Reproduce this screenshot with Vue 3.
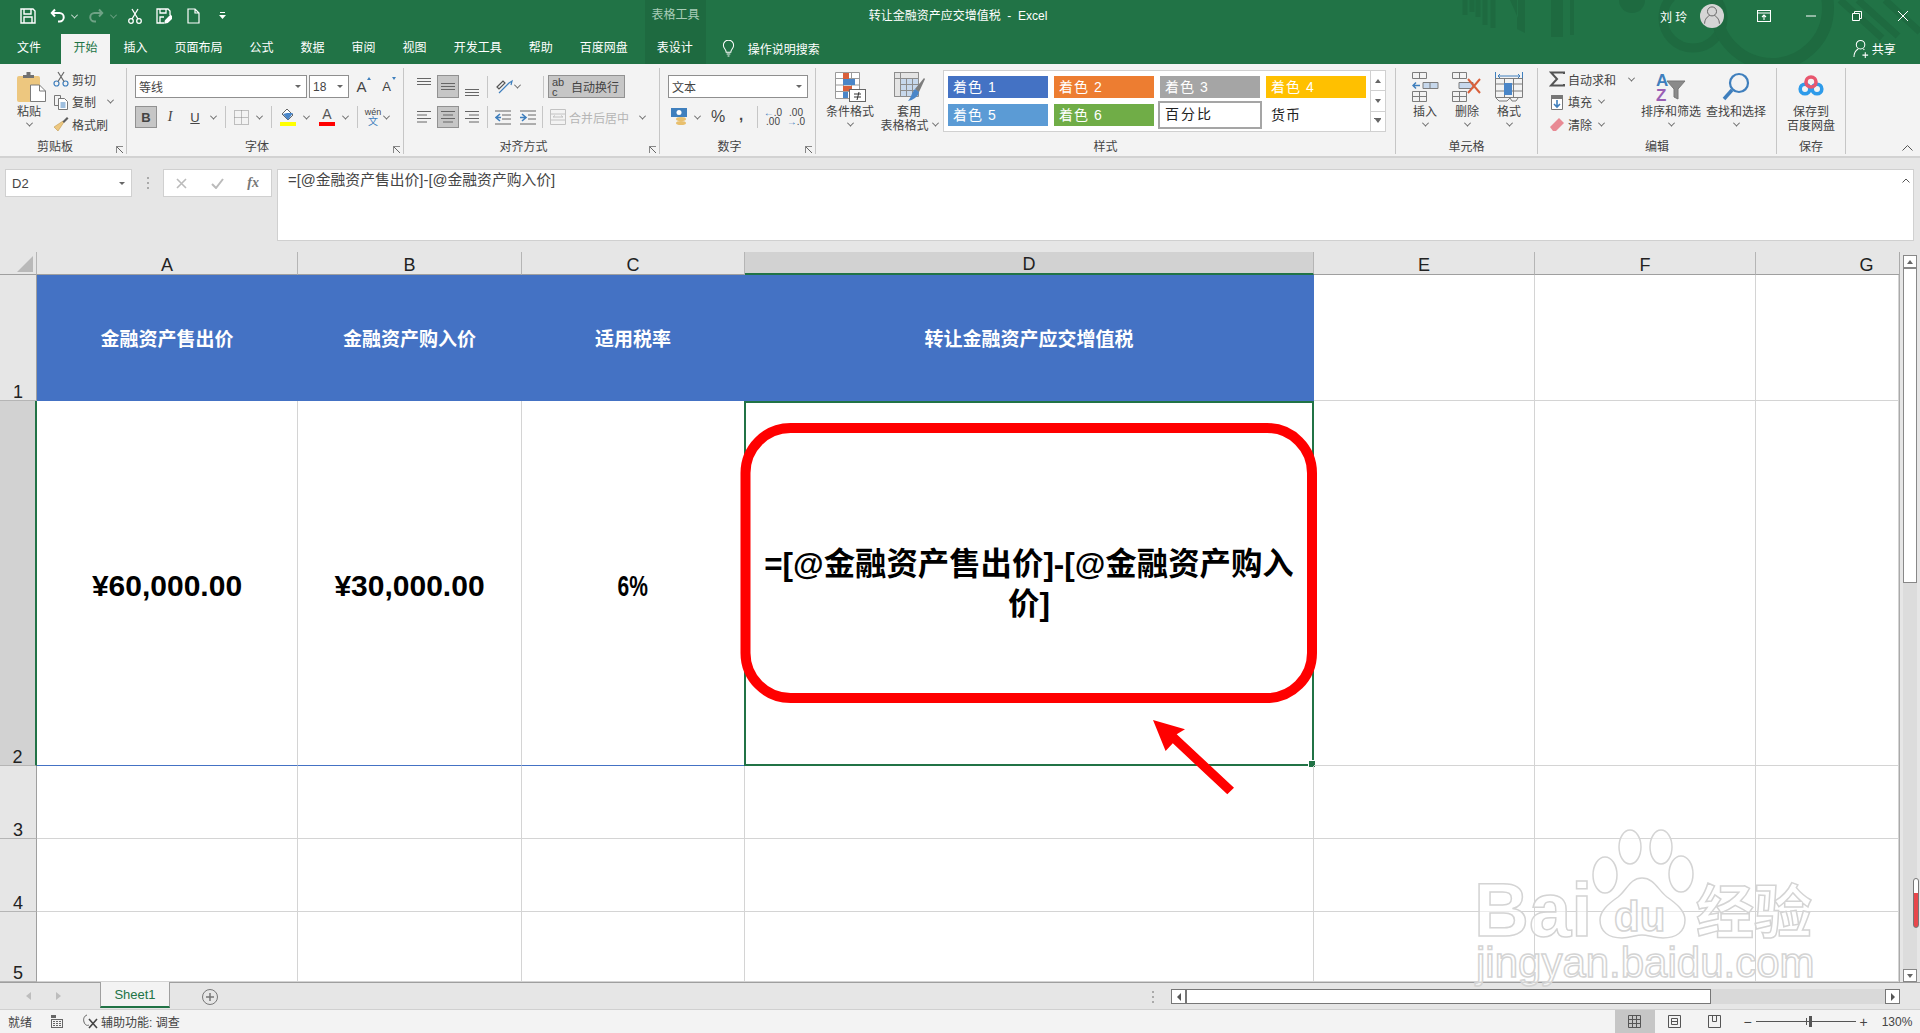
<script setup>
const tabs = ['插入', '页面布局', '公式', '数据', '审阅', '视图', '开发工具', '帮助', '百度网盘']

const styleCells = [
  { label: '着色 1', color: '#4472c4' },
  { label: '着色 2', color: '#ed7d31' },
  { label: '着色 3', color: '#a5a5a5' },
  { label: '着色 4', color: '#ffc000' },
  { label: '着色 5', color: '#5b9bd5' },
  { label: '着色 6', color: '#70ad47' },
  { label: '百分比', plain: true, picked: true },
  { label: '货币', plain: true },
]

const columns = ['A', 'B', 'C', 'D', 'E', 'F', 'G']

const formula = '=[@金融资产售出价]-[@金融资产购入价]'

// 表格内容，空串表示空单元格
const rows = [
  { n: 1, kind: 'head', cells: ['金融资产售出价', '金融资产购入价', '适用税率', '转让金融资产应交增值税', '', '', ''] },
  { n: 2, kind: 'body', cells: ['¥60,000.00', '¥30,000.00', '6%', formula, '', '', ''] },
  { n: 3, kind: 'plain', cells: ['', '', '', '', '', '', ''] },
  { n: 4, kind: 'plain', cells: ['', '', '', '', '', '', ''] },
  { n: 5, kind: 'plain', cells: ['', '', '', '', '', '', ''] },
]

const cellClass = (row, i) => ({
  'cell-head': row.kind === 'head' && i < 4,
  'cell-body': row.kind === 'body' && i < 4,
  'cell-table-end': row.kind === 'body' && i < 3,
  'cell-active': row.kind === 'body' && i === 3,
})
</script>

<template>
  <div class="excel">
    <header class="top">
      <svg class="top-pattern" viewBox="0 0 1920 64" fill="none" stroke="#1e6a40">
        <g stroke-width="5">
          <path d="M1465 0v15M1472 0v12M1478 0v17M1485 0v25M1493 0v28" />
        </g>
        <path d="M1510 0l8 18V0zM1517 0h8v33l-8-4z" fill="#1e6a40" stroke="none" />
        <path d="M1551 0h12v37h-12z" fill="#1e6a40" stroke="none" />
        <path d="M1572 0v35" stroke-width="4" />
        <circle cx="1632" cy="0" r="13" fill="#1e6a40" stroke="none" />
        <circle cx="1693" cy="18" r="30" stroke-width="9" />
        <circle cx="1772" cy="8" r="56" stroke-width="12" />
        <path d="M1840 0l42 38M1858 0l40 36M1885 0l35 32" stroke-width="7" />
      </svg>

      <div class="title-row">
        <div class="qat">
          <svg class="qat-icon" viewBox="0 0 16 16" fill="none" stroke="#fff" stroke-width="1.4">
            <path d="M1 1h12l2 2v12H1z" /><path d="M4 1v5h7V1M4 15V9h8v6" />
          </svg>
          <svg class="qat-icon undo" viewBox="0 0 16 16" fill="none" stroke="#fff" stroke-width="2">
            <path d="M5 1.500 1.800 5 5 8.500M2 5h7.500a4 4 0 0 1 0 8.500H8" />
          </svg>
          <i class="chev chev-white chev-undo"></i>
          <svg class="qat-icon redo" viewBox="0 0 16 16" fill="none" stroke="#6ea285" stroke-width="2">
            <path d="M11 1.500 14.200 5 11 8.500M14 5H6.500a4 4 0 0 0 0 8.500H8" />
          </svg>
          <i class="chev chev-dim chev-redo"></i>
          <svg class="qat-icon cut" viewBox="0 0 16 16" fill="none" stroke="#fff" stroke-width="1.300">
            <circle cx="4" cy="13" r="2.300" /><circle cx="12" cy="13" r="2.300" />
            <path d="M5 11 11 1M11 11 5 1" />
          </svg>
          <svg class="qat-icon saveas" viewBox="0 0 16 16" fill="none" stroke="#fff" stroke-width="1.300">
            <path d="M8 15H1V1h11l2 2v4" /><path d="M4 1v4h6V1M4 15V9h4" />
            <path d="M9 15l.5-2.500 5-5 2 2-5 5z" fill="#fff" />
          </svg>
          <svg class="qat-icon new" viewBox="0 0 13 16" fill="none" stroke="#fff" stroke-width="1.200">
            <path d="M1 1h7l4 4v10H1zM8 1v4h4" />
          </svg>
          <svg class="qat-more" viewBox="0 0 7 8" fill="#fff"><path d="M1 0h5v1H1zM0 3h7L3.500 7z" /></svg>
        </div>
        <div class="context-title">表格工具</div>
        <div class="doc-title">转让金融资产应交增值税&nbsp; - &nbsp;Excel</div>
        <div class="win-area">
          <span class="user-name">刘 玲</span>
          <span class="avatar">
            <svg viewBox="0 0 24 28" fill="none" stroke="#666" stroke-width="1.200">
              <circle cx="12" cy="9" r="5.500" /><path d="M3 24c0-6 4-9 6-10M21 24c0-6-4-9-6-10" />
            </svg>
          </span>
          <svg class="win-btn win-display" viewBox="0 0 14 12" fill="none" stroke="#fff" stroke-width="1.100">
            <path d="M.5.500h13v11H.5zM.5 3h13M7 10V5M5 7l2-2 2 2" />
          </svg>
          <svg class="win-btn win-min" viewBox="0 0 12 12" stroke="#fff"><path d="M1 6h10" /></svg>
          <svg class="win-btn win-max" viewBox="0 0 12 12" fill="none" stroke="#fff">
            <path d="M1.500 3.500h7v7h-7zM3.500 3.500v-2h7v7h-2" />
          </svg>
          <svg class="win-btn win-close" viewBox="0 0 12 12" stroke="#fff"><path d="M1 1l10 10M11 1 1 11" /></svg>
        </div>
      </div>

      <nav class="tab-row">
        <span class="tab tab-file">文件</span>
        <span class="tab tab-active">开始</span>
        <span v-for="t in tabs" :key="t" class="tab">{{ t }}</span>
        <span class="tab tab-context">表设计</span>
        <svg class="bulb" viewBox="0 0 14 18" fill="none" stroke="#fff" stroke-width="1.100">
          <path d="M4.500 13c0-3-3-4-3-7.500a5.500 5.500 0 0 1 11 0C12.500 9 9.500 10 9.500 13zM5 15h4M6 17h2" />
        </svg>
        <span class="search-hint">操作说明搜索</span>
        <span class="share">
          <svg viewBox="0 0 18 20" fill="none" stroke="#fff" stroke-width="1.100">
            <circle cx="8" cy="6" r="4.500" /><path d="M1 19c0-5 2-7 4.500-8.500M13 14v6M10 17h6M11 10.500l1 1" />
          </svg>
          共享
        </span>
      </nav>
    </header>

    <section class="ribbon">
      <!-- 剪贴板 -->
      <div class="group group-clip">
        <div class="group-body">
          <div class="big paste">
            <svg class="big-icon" width="29" height="30" viewBox="0 0 29 30">
              <rect x="0" y="4" width="23" height="26" rx="2" fill="#edc77f" />
              <path d="M6 6V3h3.500V0h4v3H17v3z" fill="#717171" />
              <path d="M13.500 13h9l6 6v10.500h-15z" fill="#fff" stroke="#7b7b7b" />
              <path d="M22.500 13v6h6" fill="none" stroke="#7b7b7b" />
            </svg>
            <span class="big-label">粘贴</span>
            <span class="big-label"><i class="chev"></i></span>
          </div>
          <div class="small-col">
            <div class="small-row">
              <svg viewBox="0 0 16 16" fill="none" stroke-width="1.200">
                <circle cx="3.500" cy="12.500" r="2.500" stroke="#3f7fbd" /><circle cx="12.500" cy="12.500" r="2.500" stroke="#3f7fbd" />
                <path d="M5 10.500 11 1M11 10.500 5 1" stroke="#666" />
              </svg>
              <span>剪切</span>
            </div>
            <div class="small-row">
              <svg viewBox="0 0 16 16" fill="none" stroke-width="1">
                <path d="M1.500 1.500h6v3M1.500 1.500v10h4" stroke="#777" />
                <path d="M5.500 4.500h6l3 3v8h-9z" fill="#fff" stroke="#777" />
                <path d="M7.500 9h5M7.500 11h5M7.500 13h5" stroke="#3f7fbd" />
              </svg>
              <span>复制</span>
              <i class="chev chev-copy"></i>
            </div>
            <div class="small-row">
              <svg viewBox="0 0 16 16">
                <path d="M10 5l-9 6 4 4 6-9z" fill="#edc77f" stroke="#c19a4f" stroke-width=".6" />
                <path d="M9.500 5.500 14 1l1.500 1.500L11 7z" fill="#5d5d5d" />
              </svg>
              <span>格式刷</span>
            </div>
          </div>
        </div>
        <div class="group-label with-launcher">剪贴板</div>
        <i class="launcher"></i>
      </div>

      <!-- 字体 -->
      <div class="group group-font">
        <div class="tool-row row-first">
          <div class="combo combo-font"><span>等线</span><i class="combo-caret"></i></div>
          <div class="combo combo-size"><span>18</span><i class="combo-caret"></i></div>
          <span class="size-btn size-up">A<i class="mini-tri up"></i></span>
          <span class="size-btn size-down">A<i class="mini-tri down"></i></span>
        </div>
        <div class="tool-row">
          <span class="tool pressed text-b">B</span>
          <span class="tool text-i ml-2">I</span>
          <span class="tool text-u ml-3">U</span>
          <i class="chev chev-tool"></i>
          <i class="sep sep-8"></i>
          <span class="tool">
            <svg width="15" height="15" viewBox="0 0 15 15" fill="none" stroke="#888" stroke-dasharray="1 1">
              <path d="M.5.500h14v14H.5zM7.500.500v14M.5 7.500h14" />
            </svg>
          </span>
          <i class="chev chev-tool"></i>
          <i class="sep sep-8"></i>
          <span class="tool ml-1 color-tool">
            <svg width="17" height="13" viewBox="0 0 17 13" fill="none">
              <path d="M7 1l6 6-5 5-6-6z" fill="#fff" stroke="#666" />
              <path d="M7 5h6l-5 7-5-6z" fill="#4a86c8" />
            </svg>
            <b class="swatch swatch-yellow"></b>
          </span>
          <i class="chev chev-tool"></i>
          <span class="tool ml-6 color-tool">
            <span class="letter-a">A</span>
            <b class="swatch swatch-red"></b>
          </span>
          <i class="chev chev-tool"></i>
          <i class="sep sep-8"></i>
          <span class="tool wen"><small>wén</small><em>文</em></span>
          <i class="chev"></i>
        </div>
        <div class="group-label with-launcher">字体</div>
        <i class="launcher"></i>
      </div>

      <!-- 对齐方式 -->
      <div class="group group-align">
        <div class="tool-row row-first">
          <span class="tool">
            <svg width="14" height="20" viewBox="0 0 14 20" stroke="#666"><path d="M0 1.500h14M0 4.500h14M0 7.500h14" /></svg>
          </span>
          <span class="tool pressed tall ml-2">
            <svg width="14" height="20" viewBox="0 0 14 20" stroke="#666"><path d="M0 6.500h14M0 9.500h14M0 12.500h14" /></svg>
          </span>
          <span class="tool ml-2">
            <svg width="14" height="20" viewBox="0 0 14 20" stroke="#666"><path d="M0 12.500h14M0 15.500h14M0 18.500h14" /></svg>
          </span>
          <i class="sep sep-4"></i>
          <span class="tool ml-1">
            <svg width="17" height="17" viewBox="0 0 17 17" fill="none" stroke="#555" stroke-width="1.200">
              <path d="M1 9l6-6 2 2-6 6z" /><path d="M3 15l10-10M13 5l3-2-1 4" stroke="#3f7fbd" />
            </svg>
          </span>
          <i class="chev"></i>
          <i class="sep sep-wrap"></i>
          <span class="wrap-btn">
            <span class="wrap-mark">ab<br />c</span>
            自动换行
          </span>
        </div>
        <div class="tool-row">
          <span class="tool">
            <svg width="14" height="14" viewBox="0 0 14 14" stroke="#666"><path d="M0 1.500h14M0 5h10M0 8.500h14M0 12h10" /></svg>
          </span>
          <span class="tool pressed ml-2">
            <svg width="14" height="14" viewBox="0 0 14 14" stroke="#666"><path d="M0 1.500h14M2 5h10M0 8.500h14M2 12h10" /></svg>
          </span>
          <span class="tool ml-2">
            <svg width="14" height="14" viewBox="0 0 14 14" stroke="#666"><path d="M0 1.500h14M4 5h10M0 8.500h14M4 12h10" /></svg>
          </span>
          <i class="sep sep-4"></i>
          <span class="tool">
            <svg width="16" height="15" viewBox="0 0 16 15" fill="none"><path d="M0 1h16M7 5h9M7 9h9M0 14h16" stroke="#666" /><path d="M5 4 1 7.500 5 11M1 7.500h5" stroke="#3f7fbd" stroke-width="1.600" /></svg>
          </span>
          <span class="tool ml-3">
            <svg width="16" height="15" viewBox="0 0 16 15" fill="none"><path d="M0 1h16M8 5h8M8 9h8M0 14h16" stroke="#666" /><path d="M2 4l4 3.500L2 11M6 7.500H0" stroke="#3f7fbd" stroke-width="1.600" /></svg>
          </span>
          <i class="sep sep-3"></i>
          <span class="tool merge-icon">
            <svg width="16" height="16" viewBox="0 0 16 16" fill="none" stroke="#c2c2c2">
              <path d="M.5.500h15v15H.5zM.5 5h15M.5 11h15M3 8h10M3 8l2-1.500M13 8l-2-1.500" />
            </svg>
          </span>
          <span class="merge-text">合并后居中</span>
          <i class="chev chev-merge"></i>
        </div>
        <div class="group-label with-launcher">对齐方式</div>
        <i class="launcher"></i>
      </div>

      <!-- 数字 -->
      <div class="group group-num">
        <div class="tool-row row-first">
          <div class="combo combo-num"><span>文本</span><i class="combo-caret"></i></div>
        </div>
        <div class="tool-row">
          <span class="tool">
            <svg width="17" height="18" viewBox="0 0 17 18">
              <rect x="0" y="0" width="16" height="9" fill="#3f7fbd" />
              <circle cx="8" cy="4.500" r="2.500" fill="#fff" />
              <ellipse cx="10" cy="11" rx="5" ry="2" fill="#e8bf6d" />
              <ellipse cx="10" cy="15" rx="5" ry="2" fill="#e8bf6d" />
            </svg>
          </span>
          <i class="chev chev-tool"></i>
          <span class="tool ml-6 num-sign">%</span>
          <span class="tool ml-1 num-comma">,</span>
          <i class="sep sep-num"></i>
          <span class="tool dec"><small><i class="blue">←</i>.0</small><small>.00</small></span>
          <span class="tool dec ml-1"><small>.00</small><small><i class="blue">→</i>.0</small></span>
        </div>
        <div class="group-label with-launcher">数字</div>
        <i class="launcher"></i>
      </div>

      <!-- 样式 -->
      <div class="group group-styles">
        <div class="group-body">
          <div class="big btn-cond">
            <svg class="big-icon" width="31" height="30" viewBox="0 0 31 30">
              <path d="M.5.500h24v26H.5zM8.500.500v26M16.500.500v26M.5 6.500h24M.5 13h24M.5 19.500h24" fill="#fff" stroke="#9a9a9a" />
              <rect x="8" y="1" width="6" height="6" fill="#d9603b" />
              <rect x="8" y="7" width="12" height="6" fill="#4a86c8" />
              <rect x="8" y="14" width="9" height="5" fill="#d9603b" />
              <rect x="8" y="20" width="5" height="6" fill="#4a86c8" />
              <rect x="14.500" y="17.500" width="16" height="12" fill="#fff" stroke="#666" />
              <path d="M19 22h7M19 25h7M24 20l-2 8" stroke="#333" fill="none" />
            </svg>
            <span class="big-label">条件格式</span>
            <span class="big-label"><i class="chev"></i></span>
          </div>
          <div class="big btn-table">
            <svg class="big-icon" width="31" height="30" viewBox="0 0 31 30">
              <path d="M.5.500h24v24H.5z" fill="#c7d8ec" stroke="#8d8d8d" />
              <path d="M.5 6.500h24M.5 12.500h24M.5 18.500h24M6.500.500v24M12.500.500v24M18.500.500v24" stroke="#8d8d8d" fill="none" />
              <path d="M.5.500h24v6H.5zM.5.500h6v24H.5z" fill="#e4e4e4" stroke="#8d8d8d" />
              <path d="M21 17 30 6l1 1-6 13z" fill="#7d7d7d" />
              <path d="M21 17l4 3c-1 5-6 8-11 9 3-3 4-9 7-12z" fill="#4a86c8" />
            </svg>
            <span class="big-label">套用</span>
            <span class="big-label">表格格式<i class="chev chev-inline"></i></span>
          </div>
          <div class="gallery">
            <div class="gallery-cells">
              <span
                v-for="s in styleCells"
                :key="s.label"
                class="style-cell"
                :class="{ plain: s.plain, picked: s.picked }"
                :style="s.color ? { background: s.color } : null"
              >{{ s.label }}</span>
            </div>
            <div class="gallery-scroll">
              <span><i class="tri-up"></i></span>
              <span><i class="tri-down"></i></span>
              <span class="more"><i class="tri-down"></i></span>
            </div>
          </div>
        </div>
        <div class="group-label">样式</div>
      </div>

      <!-- 单元格 -->
      <div class="group group-cells">
        <div class="group-body">
          <div class="big cell-btn">
            <svg class="big-icon" width="27" height="30" viewBox="0 0 27 30" fill="none" stroke="#7d7d7d">
              <path d="M.5.500h14v6H.5zM7.500.500v6M.5 19.500h14v10H.5zM.5 24.500h14M7.500 19.500v10" />
              <path d="M11 10.500h15v6H11zM18 10.500v6" fill="#c7d8ec" />
              <path d="M8 13.500H1M4 10.500l-3 3 3 3" stroke="#3f7fbd" stroke-width="1.500" />
            </svg>
            <span class="big-label">插入</span>
            <span class="big-label"><i class="chev"></i></span>
          </div>
          <div class="big cell-btn">
            <svg class="big-icon" width="30" height="30" viewBox="0 0 30 30" fill="none" stroke="#7d7d7d">
              <path d="M.5.500h14v6H.5zM7.500.500v6M.5 19.500h14v10H.5zM.5 24.500h14M7.500 19.500v10" />
              <path d="M7 10.500h14v6H7z" fill="#c7d8ec" />
              <path d="M16 7l12 14M28 7 16 21" stroke="#d9603b" stroke-width="2" />
            </svg>
            <span class="big-label">删除</span>
            <span class="big-label"><i class="chev"></i></span>
          </div>
          <div class="big cell-btn">
            <svg class="big-icon" width="28" height="30" viewBox="0 0 28 30" fill="none" stroke="#7d7d7d">
              <path d="M3 4h22M3 4l2-2M3 4l2 2M25 4l-2-2M25 4l-2 2M.5 0v7M27.500 0v7" stroke="#3f7fbd" />
              <path d="M.5 6.500h27v19H.5zM9.500 6.500v19M18.500 6.500v19M.5 12h27M.5 19h27" />
              <rect x="9" y="11" width="8" height="12" fill="#4a86c8" stroke="none" />
              <path d="M1 26l3 3h8l3-3 2 3h4l2-3" />
            </svg>
            <span class="big-label">格式</span>
            <span class="big-label"><i class="chev"></i></span>
          </div>
        </div>
        <div class="group-label">单元格</div>
      </div>

      <!-- 编辑 -->
      <div class="group group-edit">
        <div class="group-body">
          <div class="small-col edit-col">
            <div class="small-row">
              <svg viewBox="0 0 16 16" fill="none" stroke="#555" stroke-width="2"><path d="M15 3V1.500H2L8 8l-6 6.500h13V13" /></svg>
              <span>自动求和</span>
              <i class="chev chev-sum"></i>
            </div>
            <div class="small-row">
              <svg viewBox="0 0 16 16" fill="none">
                <path d="M2.500 1.500h11v14h-11z" fill="#fff" stroke="#777" />
                <path d="M2.500 1.500h11v3h-11z" fill="#777" stroke="#777" />
                <path d="M8 6v7M5 10l3 3 3-3" stroke="#3f7fbd" stroke-width="1.600" />
              </svg>
              <span>填充</span>
              <i class="chev chev-fill"></i>
            </div>
            <div class="small-row">
              <svg viewBox="0 0 16 16"><path d="M1 11 10 2l5 5-8 8H4z" fill="#e88a94" /></svg>
              <span>清除</span>
              <i class="chev chev-fill"></i>
            </div>
          </div>
          <div class="big edit-btn">
            <svg class="big-icon" width="31" height="30" viewBox="0 0 31 30" fill="none">
              <text x="0" y="14" class="sort-a">A</text>
              <text x="0" y="29" class="sort-z">Z</text>
              <path d="M11 9h18l-7 8v10l-4-2v-8z" fill="#8a8a8a" stroke="#777" />
            </svg>
            <span class="big-label">排序和筛选</span>
            <span class="big-label"><i class="chev"></i></span>
          </div>
          <div class="big edit-btn btn-find">
            <svg class="big-icon" width="28" height="30" viewBox="0 0 28 30" fill="none" stroke="#3f7fbd">
              <circle cx="17" cy="11" r="9" stroke-width="2.200" />
              <path d="M10 18 2 27" stroke-width="3.500" />
            </svg>
            <span class="big-label">查找和选择</span>
            <span class="big-label"><i class="chev"></i></span>
          </div>
        </div>
        <div class="group-label">编辑</div>
      </div>

      <!-- 保存 -->
      <div class="group group-save">
        <div class="big save-btn">
          <svg class="big-icon" width="28" height="30" viewBox="0 0 28 30" fill="none" stroke-width="3.600">
            <circle cx="8" cy="17" r="4.800" stroke="#2e9bea" />
            <circle cx="20" cy="17" r="4.800" stroke="#2e9bea" />
            <circle cx="14" cy="10" r="5" stroke="#e8566e" />
          </svg>
          <span class="big-label">保存到</span>
          <span class="big-label">百度网盘</span>
        </div>
        <div class="group-label">保存</div>
      </div>

      <svg class="collapse" width="11" height="6" viewBox="0 0 11 6" fill="none" stroke="#555"><path d="M.5 5.500l5-5 5 5" /></svg>
    </section>

    <section class="formula-bar">
      <div class="name-box">D2<i class="combo-caret"></i></div>
      <span class="fb-dots"></span>
      <div class="fn-box">
        <svg width="11" height="11" viewBox="0 0 11 11" stroke="#bbb" stroke-width="1.600"><path d="M1 1l9 9M10 1 1 10" /></svg>
        <svg width="13" height="11" viewBox="0 0 13 11" fill="none" stroke="#bbb" stroke-width="2"><path d="M1 6l4 4 7-9" /></svg>
        <span class="fx">fx</span>
      </div>
      <div class="formula-input">
        {{ formula }}
        <svg class="formula-up" width="8" height="5" viewBox="0 0 8 5" fill="none" stroke="#555"><path d="M.5 4.500 4 1l3.500 3.500" /></svg>
      </div>
    </section>

    <section class="sheet">
      <div class="grid">
        <div class="corner"><i></i></div>
        <div
          v-for="c in columns"
          :key="c"
          class="col-head"
          :class="{ selected: c === 'D', clipped: c === 'G' }"
        >{{ c }}</div>
        <template v-for="row in rows" :key="row.n">
          <div class="row-head" :class="{ selected: row.n === 2 }">{{ row.n }}</div>
          <div
            v-for="(text, i) in row.cells"
            :key="i"
            class="cell"
            :class="cellClass(row, i)"
          >
            <span :class="{ 'text-narrow': text === '6%' }">{{ text }}</span>
            <i v-if="row.kind === 'body' && i === 3" class="fill-handle"></i>
          </div>
        </template>
      </div>

      <div class="vscroll">
        <span class="vs-btn"><i class="tri-up"></i></span>
        <span class="vs-thumb"></span>
        <span class="vs-track"></span>
        <span class="vs-btn"><i class="tri-down"></i></span>
        <span class="vs-mark"></span>
      </div>

      <!-- 标注和水印，盖在表格上面 -->
      <svg class="overlay" viewBox="0 252 1920 730">
        <g class="watermark">
          <text x="1474" y="936" class="wm-bai">Bai</text>
          <ellipse cx="1630" cy="847" rx="11" ry="17" />
          <ellipse cx="1661" cy="847" rx="11" ry="17" />
          <ellipse cx="1605" cy="875" rx="12" ry="18" />
          <ellipse cx="1681" cy="874" rx="12" ry="18" />
          <path d="M1642 878c-12 0-15 12-24 19-10 7-18 14-18 23 0 12 9 18 22 18 8 0 14-3 20-3s13 3 21 3c13 0 22-6 22-18 0-9-8-16-18-23-9-7-13-19-25-19z" />
          <text x="1614" y="931" class="wm-du">du</text>
          <text x="1696" y="933" class="wm-cn">经验</text>
          <text x="1476" y="977" class="wm-site">jingyan.baidu.com</text>
        </g>
        <rect x="745.500" y="428" width="566.500" height="270" rx="45" fill="none" stroke="#f00" stroke-width="10" />
        <path d="M1153 720l32 9.300-8.300 5 57.300 53.400-6.700 6.600-54.500-51-7.200 7.700z" fill="#f00" />
      </svg>
    </section>

    <section class="sheet-tabs">
      <span class="nav-arrow">
        <svg width="6" height="8" viewBox="0 0 6 8" fill="#bdbdbd"><path d="M5 0v8L0 4z" /></svg>
      </span>
      <span class="nav-arrow">
        <svg width="6" height="8" viewBox="0 0 6 8" fill="#bdbdbd"><path d="M1 0v8l5-4z" /></svg>
      </span>
      <span class="sheet-tab">Sheet1</span>
      <svg class="add-sheet" width="16" height="16" viewBox="0 0 16 16" fill="none" stroke="#777">
        <circle cx="8" cy="8" r="7.500" /><path d="M8 4v8M4 8h8" stroke-width="1.500" />
      </svg>
      <span class="hs-dots"></span>
      <div class="hscroll">
        <span class="hs-btn"><svg width="4" height="8" viewBox="0 0 4 8" fill="#555"><path d="M4 0v8L0 4z" /></svg></span>
        <span class="hs-thumb"></span>
        <span class="hs-track"></span>
        <span class="hs-btn"><svg width="4" height="8" viewBox="0 0 4 8" fill="#555"><path d="M0 0v8l4-4z" /></svg></span>
      </div>
    </section>

    <footer class="status">
      <span class="st-ready">就绪</span>
      <svg class="st-macro" width="12" height="13" viewBox="0 0 12 13" fill="#666">
        <path d="M0 4h12v9H0zM1 5v7h10V5z" /><path d="M2 6h2v1H2zM5 6h2v1H5zM8 6h2v1H8zM2 8h2v1H2zM5 8h2v1H5zM8 8h2v1H8zM2 10h2v1H2zM5 10h2v1H5zM8 10h2v1H8z" /><rect x="0" y="0" width="5" height="3" />
      </svg>
      <svg class="st-access" width="16" height="15" viewBox="0 0 16 15" fill="none" stroke="#666">
        <path d="M5 1C2 2 1 5 2 8s3 4 5 3" /><path d="M7 5l8 9M15 5l-8 9" stroke="#444" stroke-width="1.600" />
      </svg>
      <span class="st-text">辅助功能: 调查</span>
      <div class="view-btns">
        <span class="view-btn on">
          <svg width="13" height="13" viewBox="0 0 13 13" fill="none" stroke="#555"><path d="M.5.500h12v12H.5zM4.500.500v12M8.500.500v12M.5 4.500h12M.5 8.500h12" /></svg>
        </span>
        <span class="view-btn">
          <svg width="13" height="13" viewBox="0 0 13 13" fill="none" stroke="#555"><path d="M.5.500h12v12H.5zM3.500 3.500h6v6h-6zM3.500 6.500h6" /></svg>
        </span>
        <span class="view-btn">
          <svg width="13" height="13" viewBox="0 0 13 13" fill="none" stroke="#555"><path d="M.5.500h12v12H.5zM4.500.500v6h4v-6" /></svg>
        </span>
      </div>
      <div class="zoom-bar">
        <span class="zoom-sign">−</span>
        <span class="zoom-track"><i class="zoom-mid"></i><i class="zoom-thumb"></i></span>
        <span class="zoom-sign">+</span>
        <span class="zoom-pct">130%</span>
      </div>
    </footer>
  </div>
</template>

<style scoped>
.excel {
  width: 1920px;
  height: 1033px;
  display: flex;
  flex-direction: column;
  overflow: hidden;
  background: #e6e6e6;
  font-family: "Liberation Sans", "Noto Sans CJK SC", sans-serif;
  font-size: 12px;
  color: #444;
}

.excel svg {
  display: block;
  flex-shrink: 0;
}

/* 顶部绿色区域 */
.top {
  position: relative;
  height: 64px;
  flex-shrink: 0;
  background: #217346;
  color: #fff;
}

.top-pattern {
  position: absolute;
  top: 0;
  left: 0;
  width: 1920px;
  height: 64px;
}

.title-row,
.tab-row {
  position: relative;
  display: flex;
  align-items: center;
  height: 32px;
}

.qat {
  position: relative;
  display: flex;
  align-items: center;
  width: 645px;
  height: 32px;
  padding-left: 20px;
  box-sizing: border-box;
}

.qat-icon {
  width: 16px;
  height: 16px;
}

.undo {
  margin-left: 14px;
}

.redo {
  margin-left: 11px;
}

.cut {
  margin-left: 11px;
}

.saveas {
  margin-left: 13px;
}

.new {
  width: 13px;
  margin-left: 15px;
}

.qat-more {
  width: 7px;
  height: 8px;
  margin-left: 19px;
}

.chev {
  display: inline-block;
  width: 4px;
  height: 4px;
  flex-shrink: 0;
  border-right: 1px solid #666;
  border-bottom: 1px solid #666;
  transform: rotate(45deg) translate(-1px, -1px);
}

.chev-white {
  border-color: #d5e5dc;
}

.chev-dim {
  border-color: #6ea285;
}

.chev-undo {
  margin-left: 6px;
}

.chev-redo {
  margin-left: 7px;
}

.context-title {
  width: 61px;
  height: 32px;
  line-height: 30px;
  text-align: center;
  background: #1e6a40;
  color: #a9cdb8;
}

.doc-title {
  flex: 1;
  padding-bottom: 3px;
  text-align: center;
  white-space: nowrap;
}

.win-area {
  display: flex;
  align-items: center;
  width: 710px;
  height: 32px;
}

.user-name {
  margin-left: 450px;
  width: 30px;
  white-space: nowrap;
}

.avatar {
  display: flex;
  justify-content: center;
  width: 24px;
  height: 24px;
  margin-left: 10px;
  border-radius: 50%;
  overflow: hidden;
  background: #d5d5d5;
}

.avatar svg {
  width: 20px;
  height: 23px;
}

.win-btn {
  width: 12px;
  height: 12px;
}

.win-display {
  width: 14px;
  margin-left: 33px;
}

.win-min {
  margin-left: 34px;
}

.win-max {
  margin-left: 34px;
}

.win-close {
  margin-left: 34px;
}

.tab-row {
  white-space: nowrap;
}

.tab {
  height: 32px;
  line-height: 33px;
  padding: 0 13.5px;
}

.tab-file {
  margin-left: 3.5px;
}

.tab-active {
  height: 30px;
  margin: 2px 0 0 6.5px;
  padding: 0 12.5px;
  line-height: 29px;
  background: #f3f3f3;
  color: #217346;
}

.tab-context {
  margin-left: 3.5px;
  padding: 0 13px 0 12px;
  background: #1e6a40;
}

.bulb {
  width: 13px;
  height: 17px;
  margin-left: 16px;
}

.search-hint {
  margin-left: 13px;
}

.share {
  display: flex;
  align-items: center;
  gap: 2px;
  margin-left: 1033px;
}

.share svg {
  width: 17px;
  height: 19px;
}

/* 功能区 */
.ribbon {
  display: flex;
  height: 94px;
  flex-shrink: 0;
  box-sizing: border-box;
  background: #f3f3f3;
  border-bottom: 2px solid #d2d2d2;
  white-space: nowrap;
}

.group {
  position: relative;
  display: flex;
  flex-direction: column;
  height: 86px;
  margin-top: 4px;
  box-sizing: border-box;
  border-right: 1px solid #c6c6c6;
}

.group-body {
  display: flex;
  height: 72px;
}

.group-label {
  margin-top: auto;
  height: 15px;
  line-height: 16px;
  text-align: center;
  color: #444;
}

.with-launcher {
  padding-right: 16px;
}

.launcher {
  position: absolute;
  right: 3px;
  bottom: 1px;
  width: 6px;
  height: 6px;
  border-left: 1px solid #888;
  border-top: 1px solid #888;
  background: linear-gradient(45deg, transparent 45%, #666 45%, #666 55%, transparent 55%);
}

.group-clip {
  width: 127px;
}

.group-font {
  width: 277px;
  padding-left: 8px;
}

.group-align {
  width: 256px;
  padding-left: 9px;
}

.group-num {
  width: 156px;
  padding-left: 8px;
}

.group-font .group-label,
.group-num .group-label {
  margin-left: -8px;
}

.group-align .group-label {
  margin-left: -9px;
}

.group-styles {
  width: 580px;
}

.group-cells {
  width: 142px;
}

.group-edit {
  width: 239px;
}

.group-save {
  width: 69px;
}

.big {
  display: flex;
  flex-direction: column;
  align-items: center;
  flex-shrink: 0;
  padding-top: 4px;
  line-height: 14px;
}

.big-icon {
  height: 30px;
  margin-bottom: 3px;
}

.big-label {
  height: 14px;
  line-height: 14px;
}

.big-label .chev {
  vertical-align: 3px;
}

.paste {
  width: 40px;
  margin-left: 9px;
}

.paste .big-icon {
  margin-left: 4px;
}

.small-col {
  display: flex;
  flex-direction: column;
  margin-left: 4px;
}

.small-row {
  display: flex;
  align-items: center;
  height: 22.5px;
  gap: 3px;
}

.small-row svg {
  width: 16px;
  height: 16px;
}

.chev-copy {
  margin-left: 9px;
}

.tool-row {
  display: flex;
  align-items: center;
  height: 22px;
  margin-top: 9px;
}

.row-first {
  height: 23px;
  margin-top: 7px;
}

.tool-row + .tool-row {
  margin-top: 8px;
}

.tool {
  display: flex;
  flex-direction: column;
  align-items: center;
  justify-content: center;
  width: 22px;
  height: 22px;
  box-sizing: border-box;
  flex-shrink: 0;
}

.tall {
  height: 23px;
}

.pressed {
  background: #c6c6c6;
  border: 1px solid #919191;
}

.ml-1 {
  margin-left: 1px;
}

.ml-2 {
  margin-left: 2px;
}

.ml-3 {
  margin-left: 3px;
}

.ml-6 {
  margin-left: 6px;
}

.text-b {
  font: bold 13px "Liberation Sans", sans-serif;
}

.text-i {
  font: italic 14px "Liberation Serif", serif;
}

.text-u {
  font: 13px "Liberation Sans", sans-serif;
  text-decoration: underline;
}

.chev-tool {
  margin: 0 1px 0 5px;
}

.sep {
  display: block;
  width: 1px;
  height: 22px;
  flex-shrink: 0;
  background: #c6c6c6;
}

.sep-8 {
  margin: 0 4px 0 8px;
}

.sep-4 {
  margin: 0 4px;
}

.sep-3 {
  margin: 0 4px 0 3px;
}

.sep-wrap {
  margin: 0 4px 0 23px;
}

.sep-num {
  margin: 0 4px 0 5px;
}

.combo {
  display: flex;
  align-items: center;
  justify-content: space-between;
  height: 23px;
  box-sizing: border-box;
  padding: 0 5px 0 3px;
  background: #fff;
  border: 1px solid #8f8f8f;
  flex-shrink: 0;
}

.combo-font {
  width: 172px;
}

.combo-size {
  width: 40px;
  margin-left: 2px;
}

.combo-num {
  width: 140px;
}

.combo-caret {
  display: block;
  width: 0;
  height: 0;
  border-left: 3px solid transparent;
  border-right: 3px solid transparent;
  border-top: 3px solid #666;
}

.size-btn {
  position: relative;
  display: block;
  width: 13px;
  font-size: 15px;
  line-height: 18px;
  text-align: center;
}

.size-up {
  margin-left: 6px;
}

.size-down {
  margin-left: 12px;
  font-size: 13px;
}

.mini-tri {
  position: absolute;
  top: -1px;
  right: -3px;
  width: 0;
  height: 0;
  border-left: 2.5px solid transparent;
  border-right: 2.5px solid transparent;
}

.mini-tri.up {
  border-bottom: 3px solid #3f7fbd;
}

.mini-tri.down {
  border-top: 3px solid #3f7fbd;
}

.color-tool {
  justify-content: flex-start;
  padding-top: 2px;
}

.swatch {
  display: block;
  width: 16px;
  height: 4px;
  margin-top: 1px;
}

.swatch-yellow {
  background: #ffff00;
}

.swatch-red {
  background: #ff0000;
}

.letter-a {
  font-size: 14px;
  line-height: 13px;
  color: #555;
}

.wen small {
  font-size: 9px;
  line-height: 10px;
}

.wen em {
  font-style: normal;
  font-size: 10px;
  line-height: 10px;
  color: #3f7fbd;
}

.wrap-btn {
  display: flex;
  align-items: center;
  width: 77px;
  height: 23px;
  box-sizing: border-box;
  padding-left: 3px;
  gap: 5px;
  background: #c6c6c6;
  border: 1px solid #919191;
}

.wrap-mark {
  width: 14px;
  font-size: 11px;
  line-height: 10px;
}

.merge-text {
  color: #b5b5b5;
}

.chev-merge {
  margin-left: 11px;
}

.num-sign {
  font-size: 16px;
}

.num-comma {
  font-size: 15px;
  font-weight: bold;
  padding-bottom: 6px;
}

.dec small {
  font-size: 10px;
  line-height: 9px;
  white-space: nowrap;
}

.blue {
  font-style: normal;
  font-weight: bold;
  color: #3f7fbd;
}

.btn-cond {
  width: 48px;
  margin-left: 10px;
}

.btn-table {
  width: 60px;
  margin-left: 5px;
}

.chev-inline {
  margin-left: 4px;
}

.gallery {
  display: flex;
  height: 62px;
  margin: 2px 0 0 4px;
  box-sizing: border-box;
  background: #fff;
  border: 1px solid #d0d0d0;
}

.gallery-cells {
  display: grid;
  grid-template-columns: repeat(4, 100px);
  grid-auto-rows: 22px;
  gap: 6px;
  padding: 5px 4px;
}

.style-cell {
  padding-left: 5px;
  font-size: 14px;
  line-height: 22px;
  letter-spacing: 1px;
  color: #fff;
}

.style-cell.plain {
  color: #222;
}

.style-cell.picked {
  margin: -3px -2px;
  padding-left: 5px;
  box-sizing: border-box;
  line-height: 22px;
  letter-spacing: 2px;
  border: 2px solid #a5a5a5;
  box-shadow: inset 0 0 0 1px #fff;
}

.gallery-scroll {
  display: flex;
  flex-direction: column;
  width: 14px;
  margin-left: auto;
  border-left: 1px solid #d0d0d0;
}

.gallery-scroll span {
  display: flex;
  flex: 1;
  align-items: center;
  justify-content: center;
  background: #fff;
  border-bottom: 1px solid #d0d0d0;
}

.gallery-scroll span:last-child {
  border-bottom: 0;
}

.more {
  position: relative;
}

.more::before {
  content: "";
  position: absolute;
  top: 6px;
  left: 3px;
  width: 7px;
  height: 1px;
  background: #666;
}

.tri-up {
  display: block;
  width: 0;
  height: 0;
  border-left: 3px solid transparent;
  border-right: 3px solid transparent;
  border-bottom: 4px solid #666;
}

.tri-down {
  display: block;
  width: 0;
  height: 0;
  border-left: 3px solid transparent;
  border-right: 3px solid transparent;
  border-top: 4px solid #666;
}

.group-cells .group-body {
  padding-left: 8px;
}

.cell-btn {
  width: 42px;
}

.edit-col {
  width: 91px;
  margin-left: 11px;
}

.chev-sum {
  margin-left: 10px;
}

.chev-fill {
  margin-left: 4px;
}

.edit-btn {
  width: 62px;
}

.btn-find {
  margin-left: 3px;
}

.sort-a {
  font: bold 17px "Liberation Sans", sans-serif;
  fill: #3f7fbd;
}

.sort-z {
  font: bold 17px "Liberation Sans", sans-serif;
  fill: #9a5fb4;
}

.collapse {
  align-self: flex-end;
  margin: 0 7px 5px auto;
}

/* 编辑栏 */
.formula-bar {
  display: flex;
  height: 94px;
  flex-shrink: 0;
  box-sizing: border-box;
  padding: 11px 6px 0 5px;
  align-items: flex-start;
}

.name-box {
  display: flex;
  align-items: center;
  justify-content: space-between;
  width: 127px;
  height: 28px;
  box-sizing: border-box;
  padding: 0 6px;
  background: #fff;
  border: 1px solid #d0d0d0;
  font-size: 13px;
}

.fb-dots {
  display: block;
  width: 2px;
  height: 12px;
  margin: 8px 14px 0 15px;
  background: repeating-linear-gradient(#aaa 0 2px, transparent 2px 5px);
}

.fn-box {
  display: flex;
  align-items: center;
  justify-content: space-between;
  width: 109px;
  height: 28px;
  box-sizing: border-box;
  padding: 0 12px;
  background: #fff;
  border: 1px solid #d0d0d0;
}

.fx {
  font: italic bold 14px "Liberation Serif", serif;
  color: #777;
}

.formula-input {
  position: relative;
  flex: 1;
  height: 72px;
  margin-left: 5px;
  box-sizing: border-box;
  padding: 2px 10px;
  background: #fff;
  border: 1px solid #d0d0d0;
  font-size: 14.8px;
  line-height: 17px;
}

.formula-up {
  position: absolute;
  top: 8px;
  right: 3px;
}

/* 表格 */
.sheet {
  position: relative;
  display: flex;
  height: 730px;
  flex-shrink: 0;
  background: #fff;
}

.grid {
  display: grid;
  grid-template-columns: 37px 261px 224px 223px 569px 221px 221px 143px;
  grid-template-rows: 23px 126px 365px 73px 73px 70px;
  width: 1899px;
  flex-shrink: 0;
}

.corner {
  display: flex;
  justify-content: flex-end;
  align-items: flex-end;
  padding: 0 3px 2px 0;
  background: #e6e6e6;
  border-right: 1px solid #b5b5b5;
  border-bottom: 1px solid #9f9f9f;
}

.corner i {
  display: block;
  width: 0;
  height: 0;
  border-left: 16px solid transparent;
  border-bottom: 16px solid #b9b9b9;
}

.col-head {
  display: flex;
  align-items: flex-end;
  justify-content: center;
  background: #e6e6e6;
  border-right: 1px solid #b5b5b5;
  border-bottom: 1px solid #9f9f9f;
  font-size: 18px;
  line-height: 18px;
  color: #222;
}

.col-head.selected {
  background: #d2d2d2;
  border-bottom: 2px solid #217346;
}

.col-head.clipped {
  padding-left: 78px;
  border-right: 0;
}

.row-head {
  display: flex;
  align-items: flex-end;
  justify-content: center;
  background: #e6e6e6;
  border-right: 1px solid #9f9f9f;
  border-bottom: 1px solid #b5b5b5;
  font-size: 18px;
  line-height: 15px;
  color: #222;
}

.row-head.selected {
  background: #d2d2d2;
  border-right: 2px solid #217346;
}

.cell {
  position: relative;
  display: flex;
  align-items: center;
  justify-content: center;
  box-sizing: border-box;
  border-right: 1px solid #d4d4d4;
  border-bottom: 1px solid #d4d4d4;
  text-align: center;
}

.cell-head {
  background: #4472c4;
  border-color: #4472c4;
  color: #fff;
  font-size: 19px;
  font-weight: bold;
}

.cell-body {
  padding-top: 5px;
  font-size: 30px;
  font-weight: bold;
  line-height: 40px;
  color: #000;
}

.cell-table-end {
  border-bottom-color: #4472c4;
}

.cell-active {
  padding: 2px 12px 0;
  font-size: 31.4px;
  border: 2px solid #217346;
  margin-left: -1px;
}

.text-narrow {
  display: inline-block;
  transform: scaleX(0.7);
}

.fill-handle {
  position: absolute;
  right: -4px;
  bottom: -4px;
  width: 6px;
  height: 6px;
  background: #217346;
  border: 1px solid #fff;
}

/* 右侧滚动条 */
.vscroll {
  position: relative;
  display: flex;
  flex-direction: column;
  align-items: center;
  width: 21px;
  flex-shrink: 0;
  box-sizing: border-box;
  padding: 3px 0 0;
  background: #e6e6e6;
  border-left: 1px solid #aaa;
}

.vs-btn {
  display: flex;
  align-items: center;
  justify-content: center;
  width: 14px;
  height: 13px;
  flex-shrink: 0;
  background: #fff;
  border: 1px solid #888;
  box-sizing: border-box;
}

.vs-thumb {
  display: block;
  width: 14px;
  height: 315px;
  flex-shrink: 0;
  box-sizing: border-box;
  background: #fff;
  border: 1px solid #888;
}

.vs-track {
  display: block;
  width: 14px;
  flex: 1;
  background: #dcdcdc;
}

.vs-mark {
  position: absolute;
  right: 1px;
  top: 626px;
  width: 6px;
  height: 50px;
  box-sizing: border-box;
  border: 1px solid #777;
  border-radius: 3px;
  background: linear-gradient(#fff 0 30%, #e8474c 30% 100%);
}

.overlay {
  position: absolute;
  top: 0;
  left: 0;
  width: 1920px;
  height: 730px;
  overflow: visible;
  pointer-events: none;
}

.watermark {
  fill: rgba(255, 255, 255, 0.55);
  stroke: #d4d4d4;
  stroke-width: 1.5;
}

.wm-bai {
  font: bold 76px "Liberation Sans", sans-serif;
}

.wm-du {
  font: bold 42px "Liberation Sans", sans-serif;
}

.wm-cn {
  font: bold 58px "Noto Sans CJK SC", sans-serif;
}

.wm-site {
  font: 42px "Liberation Sans", sans-serif;
}

/* 底部工作表标签 */
.sheet-tabs {
  display: flex;
  align-items: flex-start;
  height: 28px;
  flex-shrink: 0;
  box-sizing: border-box;
  background: #e6e6e6;
  border-top: 1px solid #9f9f9f;
  border-bottom: 1px solid #d0d0d0;
}

.nav-arrow {
  display: flex;
  align-items: center;
  justify-content: center;
  width: 29px;
  height: 26px;
}

.nav-arrow:first-child {
  margin-left: 14px;
}

.sheet-tab {
  width: 70px;
  height: 26px;
  margin-left: 28px;
  box-sizing: border-box;
  background: #f3f3f3;
  border-left: 1px solid #9f9f9f;
  border-right: 1px solid #9f9f9f;
  border-bottom: 2px solid #217346;
  margin-top: -1px;
  text-align: center;
  font-size: 13px;
  line-height: 26px;
  color: #217346;
}

.add-sheet {
  margin: 6px 0 0 32px;
}

.hs-dots {
  display: block;
  width: 2px;
  height: 12px;
  margin: 8px 0 0 934px;
  background: repeating-linear-gradient(#aaa 0 2px, transparent 2px 5px);
}

.hscroll {
  display: flex;
  width: 729px;
  height: 15px;
  margin: 6px 0 0 17px;
  background: #d9d9d9;
}

.hs-btn {
  display: flex;
  align-items: center;
  justify-content: center;
  width: 15px;
  height: 15px;
  flex-shrink: 0;
  box-sizing: border-box;
  background: #fff;
  border: 1px solid #777;
}

.hs-thumb {
  display: block;
  width: 525px;
  box-sizing: border-box;
  background: #fff;
  border: 1px solid #777;
}

.hs-track {
  display: block;
  flex: 1;
}

/* 状态栏 */
.status {
  display: flex;
  align-items: center;
  flex: 1;
  background: #f3f3f3;
  font-size: 12px;
  color: #444;
}

.st-ready {
  margin-left: 8px;
}

.st-macro {
  margin-left: 19px;
}

.st-access {
  margin-left: 19px;
}

.st-text {
  margin-left: 3px;
  white-space: nowrap;
}

.view-btns {
  display: flex;
  margin-left: 1435px;
  height: 100%;
}

.view-btn {
  display: flex;
  align-items: center;
  justify-content: center;
  width: 40px;
  height: 100%;
}

.view-btn.on {
  background: #c6c6c6;
}

.zoom-bar {
  display: flex;
  align-items: center;
  margin-left: 8px;
}

.zoom-sign {
  width: 10px;
  text-align: center;
  font-size: 14px;
}

.zoom-track {
  position: relative;
  display: block;
  width: 100px;
  height: 1px;
  margin: 0 3px;
  background: #555;
}

.zoom-mid {
  position: absolute;
  left: 50px;
  top: -3px;
  width: 1px;
  height: 7px;
  background: #555;
}

.zoom-thumb {
  position: absolute;
  left: 53px;
  top: -5px;
  width: 3px;
  height: 11px;
  background: #555;
}

.zoom-pct {
  margin-left: 13px;
}
</style>

<style>
html,
body {
  margin: 0;
  padding: 0;
  overflow: hidden;
}
</style>
